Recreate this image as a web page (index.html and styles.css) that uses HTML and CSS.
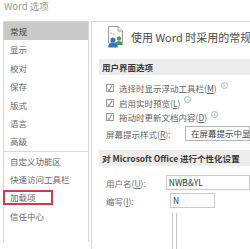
FILE: index.html
```html
<!DOCTYPE html>
<html lang="zh-CN">
<head>
  <meta charset="UTF-8">
  <meta name="viewport" content="width=device-width, initial-scale=1.0">
  <title>Word 选项</title>
  <link rel="stylesheet" href="styles.css">
</head>
<body>
  <div class="title">Word 选项</div>

  <div class="dialog">
    <ul class="nav">
      <li class="active">常规</li>
      <li>显示</li>
      <li>校对</li>
      <li>保存</li>
      <li>版式</li>
      <li>语言</li>
      <li>高级</li>
      <li class="sep">自定义功能区</li>
      <li>快速访问工具栏</li>
      <li class="marked"><span>加载项</span></li>
      <li>信任中心</li>
    </ul>

    <div class="main">
      <div class="intro">
        <svg class="intro-icon" width="21" height="22" viewBox="0 0 21 22">
          <path d="M3.5 0.5 H13 L17.5 5 V17 H3.5 Z" fill="#fff" stroke="#9a9a9a"/>
          <path d="M13 0.5 V5 H17.5" fill="#eee" stroke="#9a9a9a"/>
          <circle cx="14" cy="12.5" r="2.2" fill="#4f9a5a"/>
          <path d="M10.2 19 C10.2 16 11.8 15 14 15 C16.2 15 17.8 16 17.8 19 Z" fill="#4f9a5a"/>
          <circle cx="8" cy="14" r="2.6" fill="#2f78b8"/>
          <path d="M3.2 21.5 C3.2 18 5 16.8 8 16.8 C11 16.8 12.8 18 12.8 21.5 Z" fill="#2f78b8"/>
          <circle cx="6" cy="7" r="0.8" fill="#8fb8d8"/>
          <circle cx="9" cy="8.5" r="0.8" fill="#8fb8d8"/>
        </svg>
        <span class="intro-text">使用 Word 时采用的常规选项。</span>
      </div>

      <div class="band">用户界面选项</div>
      <div class="opts">
        <div class="opt"><span class="box">✓</span>选择时显示浮动工具栏(<u>M</u>)<span class="info">i</span></div>
        <div class="opt"><span class="box">✓</span>启用实时预览(<u>L</u>)<span class="info">i</span></div>
        <div class="opt"><span class="box">✓</span>拖动时更新文档内容(<u>D</u>)<span class="info">i</span></div>
        <div class="field tip">
          <span class="lbl">屏幕提示样式(<u>R</u>):</span>
          <span class="select">在屏幕提示中显示功能说明</span>
        </div>
      </div>

      <div class="band">对 Microsoft Office 进行个性化设置</div>
      <div class="form">
        <div class="field">
          <span class="lbl">用户名(<u>U</u>):</span>
          <span class="input">NWB&amp;YL</span>
        </div>
        <div class="field">
          <span class="lbl">缩写(<u>I</u>):</span>
          <span class="input short">N</span>
        </div>
        <div class="group"><div class="group-inner"></div></div>
      </div>
    </div>
  </div>
</body>
</html>
```

FILE: styles.css
```css
body {
  margin: 0;
  width: 250px;
  height: 249px;
  overflow: hidden;
  background: #fff;
  font-family: "Noto Sans CJK SC", "Noto Sans", sans-serif;
  font-size: 8.5px;
  color: #666;
  white-space: nowrap;
}

u {
  text-decoration: underline;
}

.title {
  height: 21px;
  line-height: 12px;
  padding-left: 4px;
  font-size: 9.5px;
  color: #999;
}

.dialog {
  display: flex;
  gap: 2px;
  margin-left: 3px;
  height: 228px;
}

/* left menu */
.nav {
  list-style: none;
  margin: 0;
  padding: 0;
  width: 84px;
  flex: none;
  height: 220px;
  border: 1px solid #d4d4d4;
  border-bottom: none;
}

.nav li {
  height: 18.4px;
  line-height: 18.4px;
  padding-left: 6px;
  color: #666;
}

.nav li.active {
  background: #c9c9c9;
  color: #444;
}

.nav li.sep {
  border-top: 1px solid #dadada;
}

.nav li.marked {
  display: flex;
  align-items: center;
}

.nav li.marked span {
  box-sizing: border-box;
  display: block;
  width: 50px;
  height: 15px;
  line-height: 11px;
  margin-left: -7px;
  padding-left: 5px;
  border: 2px solid #cf3b46;
}

/* right panel */
.main {
  flex: 1;
  min-width: 0;
  border-left: 1px solid #d8d8d8;
  border-top: 1px solid #d8d8d8;
  overflow: hidden;
}

.intro {
  display: flex;
  align-items: center;
  gap: 5px;
  height: 30px;
  padding-left: 13px;
  margin-bottom: 7px;
}

.intro-icon {
  flex: none;
}

.intro-text {
  font-size: 11px;
  color: #4a4a4a;
}

.band {
  margin-left: 7px;
  height: 16px;
  line-height: 16px;
  padding-left: 3px;
  background: #ececec;
  color: #3a3a3a;
  font-weight: bold;
}

.opts {
  padding: 6px 0 7px 14px;
}

.opt {
  display: flex;
  align-items: center;
  height: 14.5px;
  color: #606060;
}

.box {
  box-sizing: border-box;
  width: 8px;
  height: 8px;
  margin-right: 5px;
  border: 1px solid #999;
  font-size: 7px;
  line-height: 6px;
  text-align: center;
  color: #444;
}

.info {
  box-sizing: border-box;
  display: inline-block;
  width: 7px;
  height: 7px;
  margin-left: 4px;
  margin-top: -6px;
  border: 1px solid #9fb5c8;
  border-radius: 50%;
  font-size: 5px;
  line-height: 5px;
  text-align: center;
  color: #7f9bb5;
  font-family: "DejaVu Serif", serif;
}

.field {
  display: flex;
  align-items: center;
  height: 18px;
}

.lbl {
  width: 64px;
  color: #666;
}

.field.tip .lbl {
  width: 86px;
}

.select {
  box-sizing: border-box;
  height: 15px;
  line-height: 13px;
  padding-left: 5px;
  border: 1px solid #b4b4b4;
  width: 70px;
  color: #444;
  overflow: hidden;
}

.form {
  padding: 8px 0 0 14px;
}

.input {
  box-sizing: border-box;
  height: 15px;
  line-height: 13px;
  width: 90px;
  padding-left: 2px;
  border: 1px solid #c8c8c8;
  color: #333;
}

.input.short {
  width: 45px;
}

.group {
  margin: 3px 0 0 66px;
  width: 4px;
  height: 40px;
  border-left: 1px solid #c4c4c4;
}

.group-inner {
  margin-left: 3px;
  height: 40px;
  border-left: 1px solid #c4c4c4;
}
```
